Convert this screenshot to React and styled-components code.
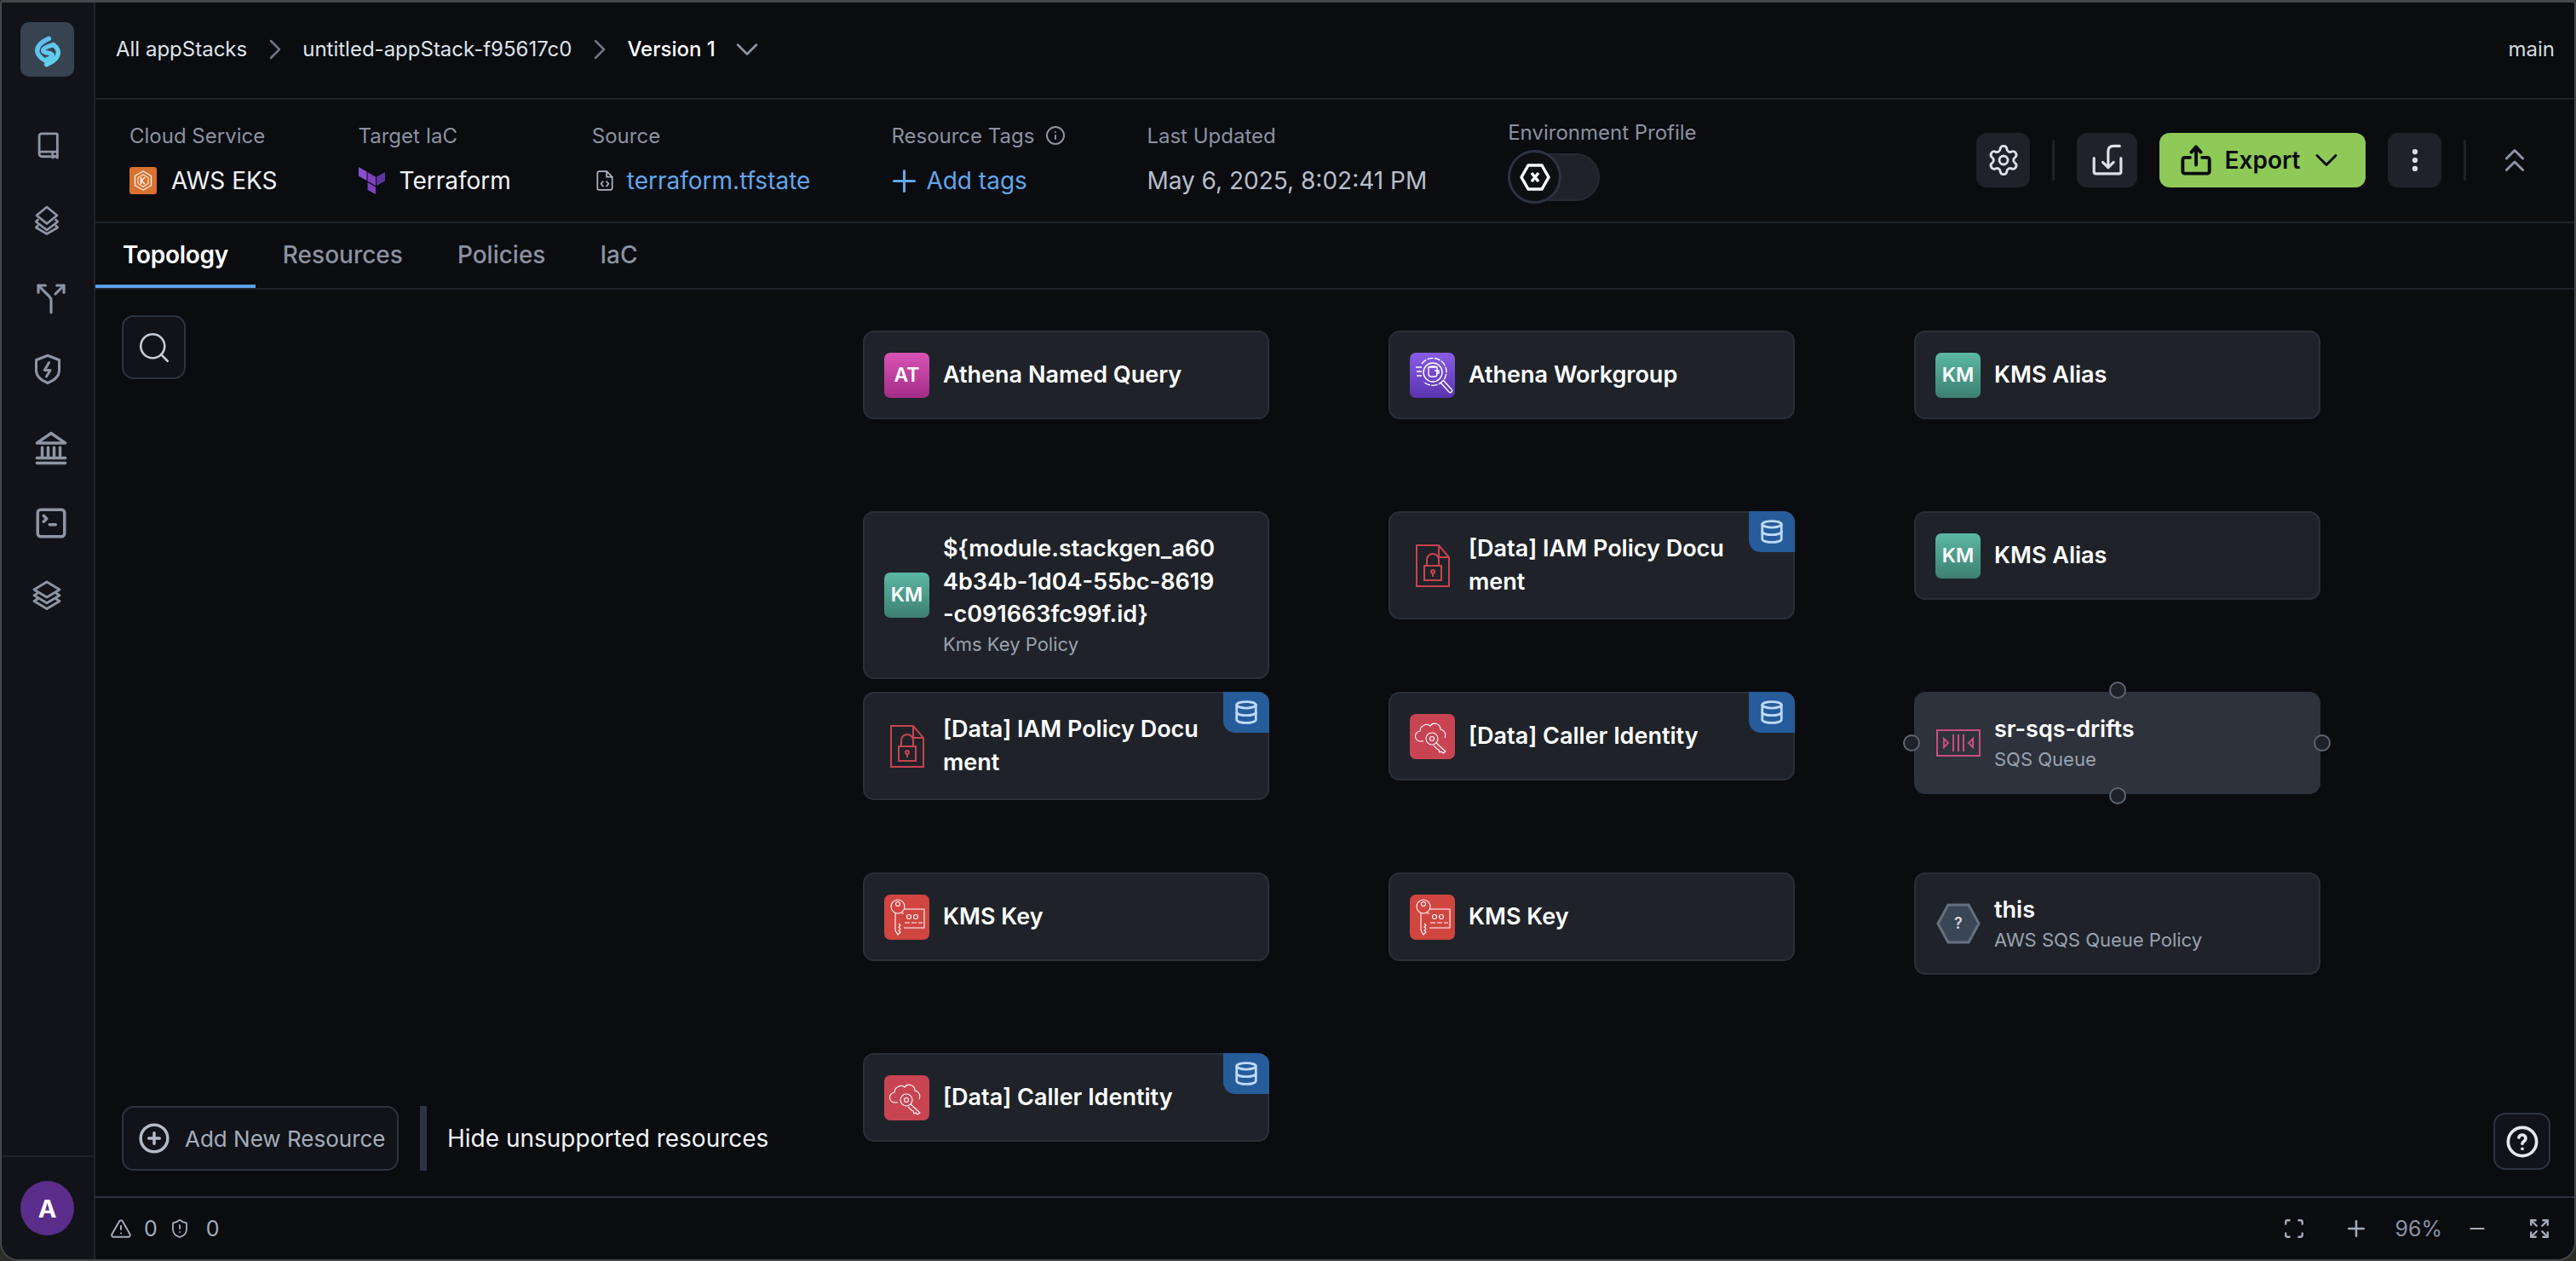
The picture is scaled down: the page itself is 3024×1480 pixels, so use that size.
import React from "react";
import styled, { createGlobalStyle } from "styled-components";
import {
  Settings, EllipsisVertical, ChevronsUp, ChevronDown, ChevronRight, Search, Plus, Info,
  Database, CirclePlus, TriangleAlert, ShieldAlert, Minus, Scan, Expand, SquareTerminal, Split,
} from "lucide-react";

const Global = createGlobalStyle`
  html, body { margin: 0; padding: 0; background: #2b2d26; }
  body { font-family: Inter, "Noto Sans", sans-serif; -webkit-font-smoothing: antialiased; }
  * { box-sizing: border-box; }
`;

const Frame = styled.div`
  width: 3024px; height: 1480px; display: flex; background: #0a0c10; color: #fff;
  border: 2px solid #45474b; border-top-width: 3px; border-radius: 4px 4px 22px 22px; overflow: hidden;
`;
const Sidebar = styled.aside`
  width: 110px; flex: none; display: flex; flex-direction: column; background: #111318;
  border-right: 2px solid #1f2329; padding-left: 22px;
`;
const LogoBox = styled.div`
  width: 63px; height: 64px; margin-top: 23px; border-radius: 10px; background: #384351;
  display: flex; align-items: center; justify-content: center;
`;
const NavList = styled.nav`display: flex; flex-direction: column; margin-top: 63px;`;
const NavItem = styled.div`
  width: 63px; height: 36px; margin-top: ${p => p.$gap}px; display: flex; align-items: center; justify-content: center;
  color: #8e96a4; transform: translateX(${p => p.$dx}px);
`;
const SideFoot = styled.div`
  margin-top: auto; margin-left: -22px; border-top: 2px solid #1f2329; padding: 28px 0 28px 22px;
`;
const Avatar = styled.div`
  width: 63px; height: 64px; border-radius: 50%; background: #5b2d8a; display: flex; align-items: center; justify-content: center;
  font-weight: 700; font-size: 29px; color: #fff;
`;
const Main = styled.main`flex: 1; min-width: 0; display: flex; flex-direction: column;`;
const Header = styled.header`
  height: 114px; flex: none; display: flex; align-items: center; padding: 0 23px 3px 24px; border-bottom: 2px solid #1f2329; font-size: 24px; color: #dfe3e9;
`;
const Crumb = styled.span`font-weight: ${p => (p.$strong ? 500 : 400)}; color: ${p => (p.$strong ? "#fff" : "#dfe3e9")};`;
const Sep = styled.span`display: flex; color: #6f7683; margin: 0 12px 0 13px;`;
const Caret = styled.span`display: flex; color: #8e96a4; margin-left: 15px;`;
const Branch = styled.span`margin-left: auto; color: #d5d9df;`;
const InfoBar = styled.section`
  height: 145px; flex: none; display: flex; gap: 95px; padding: 25px 47px 0 40px; border-bottom: 2px solid #1f2329;
`;
const Col = styled.div`display: flex; flex-direction: column; margin-top: ${p => p.$top || 0}px;`;
const Label = styled.div`display: flex; align-items: center; gap: 13px; height: 34px; font-size: 24px; color: #8b92a0;`;
const Value = styled.div`
  display: flex; align-items: center; gap: ${p => p.$gap || 17}px; height: 40px; margin-top: 16px; font-size: 28px; color: ${p => p.$color || "#f2f4f7"};
`;
const FileGlyph = styled.span`display: flex; color: #aeb5c1; margin-left: 2px;`;
const PlusGlyph = styled.span`display: flex; margin-left: -5px;`;
const Toggle = styled.div`position: relative; width: 108px; height: 63px; margin-top: 4px; display: flex; align-items: center;`;
const Track = styled.div`position: absolute; right: 0; top: 4px; width: 90px; height: 56px; border-radius: 28px; background: #1f2329; border: 2px solid #252a32;`;
const Knob = styled.div`
  position: relative; width: 63px; height: 63px; border-radius: 50%; background: #0d0f13; border: 3px solid #2d3340; display: flex; align-items: center; justify-content: center;
`;
const Actions = styled.div`margin-left: auto; margin-top: 14px; height: 64px; display: flex; align-items: center; gap: 26px;`;
const IconBtn = styled.button`
  width: ${p => p.$w || 63}px; height: 64px; padding: 0; border: 0; border-radius: 12px; background: #1f2329; color: #dde1e7; display: flex; align-items: center; justify-content: center;
`;
const ExportBtn = styled.button`
  width: 242px; height: 64px; padding: 0; border: 0; border-radius: 12px; background: #8fc957; color: #0a0c10; display: flex; align-items: center; justify-content: center; gap: 15px;
  font: 600 28px Inter, sans-serif;
`;
const ExportCaret = styled.span`display: flex; margin-left: -6px;`;
const VDiv = styled.span`width: 3px; height: 48px; background: #1f2329; border-radius: 2px;`;
const Collapse = styled.span`display: flex; color: #8e96a4; margin-left: 8px;`;
const Tabs = styled.div`height: 78px; flex: none; display: flex; border-bottom: 2px solid #1f2329;`;
const Tab = styled.div`
  height: 76px; padding: 2px 32px 0; display: flex; align-items: center; font-size: 28px;
  font-weight: ${p => (p.$active ? 600 : 500)}; color: ${p => (p.$active ? "#fff" : "#8b92a0")};
  letter-spacing: ${p => (p.$active ? "-0.3px" : "0")};
  border-bottom: 4px solid ${p => (p.$active ? "#5a9fe6" : "transparent")};
`;
const Canvas = styled.div`flex: 1; position: relative; min-height: 0;`;
const FloatBtn = styled.button`
  position: absolute; width: ${p => p.$size}px; height: ${p => p.$size}px; padding: 0; border-radius: 14px; border: 2px solid #2d3340; background: #111318;
  display: flex; align-items: center; justify-content: center; color: ${p => p.$color};
  ${p => p.$top !== undefined && `top: ${p.$top}px; left: ${p.$left}px;`}
  ${p => p.$bottom !== undefined && `bottom: ${p.$bottom}px; right: ${p.$right}px;`}
`;
const AddBar = styled.div`position: absolute; left: 31px; bottom: 30px; height: 76px; display: flex; align-items: center;`;
const AddBtn = styled.button`
  width: 325px; height: 76px; padding: 0 0 0 17px; border: 2px solid #2d3340; border-radius: 14px; background: #111318; color: #a5adba;
  display: flex; align-items: center; gap: 17px; font: 400 26px Inter, sans-serif;
`;
const Bar = styled.span`width: 8px; height: 76px; background: #2d3340; margin: 0 24px 0 25px;`;
const HideText = styled.span`font-size: 28px; color: #f2f4f7;`;
const Node = styled.div`
  position: absolute; left: ${p => p.$x}px; top: ${p => p.$y}px; width: 477px; min-height: 104px;
  display: flex; align-items: center; gap: 16px; padding: 23px 23px;
  border-radius: 13px; background: ${p => (p.$selected ? "#2d323c" : "#1f2329")}; border: 2px solid ${p => (p.$selected ? "#2d323c" : "#2a2f38")};
`;
const Tile = styled.div`
  width: 53px; height: 53px; flex: none; border-radius: 7px; display: flex; align-items: center; justify-content: center;
  background: ${p => p.$bg}; font-weight: 600; font-size: 23px; color: #fff;
`;
const NodeText = styled.div`min-width: 0; width: 322px;`;
const NodeTitle = styled.div`font-size: 27px; line-height: 38.6px; font-weight: 600; color: #fff; word-break: break-all;`;
const NodeSub = styled.div`font-size: 22px; line-height: 31px; color: #9aa2af;`;
const Badge = styled.div`
  position: absolute; right: -2px; top: -2px; width: 54px; height: 48px; display: flex; align-items: center; justify-content: center;
  background: #265c9a; color: #bfdbfe; border-radius: 0 13px 0 14px;
`;
const Handle = styled.span`
  position: absolute; width: 20px; height: 20px; border-radius: 50%; border: 2px solid #5d6572; background: #1f2329;
  ${p => p.$side === "top" && "top: -14px; left: 50%; margin-left: -10px;"}
  ${p => p.$side === "bottom" && "bottom: -14px; left: 50%; margin-left: -10px;"}
  ${p => p.$side === "left" && "left: -15px; top: 50%; margin-top: -10px;"}
  ${p => p.$side === "right" && "right: -14px; top: 50%; margin-top: -10px;"}
`;
const StatusBar = styled.footer`
  height: 74px; flex: none; border-top: 2px solid #2d3340; display: flex; align-items: center; padding: 0 28px 0 17px; font-size: 25px; color: #a5adba;
`;
const StatusItem = styled.span`display: flex; align-items: center; margin-left: ${p => p.$ml || 0}px; color: ${p => p.$color || "#a5adba"};`;
const Spacer = styled.span`flex: 1;`;

/* drawings */
const Logo = () => (
  <svg width="63" height="64" viewBox="0 0 64 64" fill="none" stroke="url(#lg)" strokeWidth="5.500" strokeLinecap="round" strokeLinejoin="round">
    <defs>
      <linearGradient id="lg" gradientUnits="userSpaceOnUse" x1="18" y1="18" x2="46" y2="52">
        <stop offset="0" stopColor="#62b8f2" /><stop offset="1" stopColor="#5fd8e8" />
      </linearGradient>
    </defs>
    <path d="M34 19C27 22 20 27 20 33.500c0 4 3 7 6 9.500" />
    <path d="M31 50c7-3 14-8 14-14.500 0-4-3-7-6-9" />
    <path d="M39 26.500C33 28 27 30 27 33.500c0 3.500 11 2 11 5.500 0 3-5 4-9 6" />
  </svg>
);
const S = ({ w, h, vb = "0 0 24 24", sw = 2, children }) => (
  <svg width={w} height={h || w} viewBox={vb} fill="none" stroke="currentColor" strokeWidth={sw} strokeLinecap="round" strokeLinejoin="round">{children}</svg>
);
const BookIcon = () => (
  <S w={34} h={38} sw={2}><path d="M5 18V4a2 2 0 0 1 2-2h12a1 1 0 0 1 1 1v16M5 18a2.500 2.500 0 0 0 0 .5C5 20 6 21 7 21h7M5 18c0-.8 1-1 2-1h13M16 17v5l2-1.500 2 1.500v-5" /></S>
);
const StackIcon = () => (
  <S w={38} h={36} vb="0 0 24 24" sw={1.800}><path d="M12 2 20 8.500 12 15 4 8.500Z" /><path d="M5 12l-1.500 1.500L12 20l8.500-6.500L19 12" /><path d="M5 16.500 3.500 18 12 23l8.500-5L19 16.500" /></S>
);
const ShieldBolt = () => (
  <S w={36} h={38} sw={2}><path d="M12 1.500 21 5v8c0 5-4 8-9 10-5-2-9-5-9-10V5Z" /><path d="M13 7l-3.500 6H14l-3 5" /></S>
);
const BankIcon = () => (
  <S w={42} h={42} sw={2}><path d="M2.500 8.500 12 2l9.500 6.500Z" /><path d="M6 11.500V17M10 11.500V17M14 11.500V17M18 11.500V17M2.500 18.500h19M2.500 22h19" /></S>
);
const StackThin = () => (
  <S w={38} h={36} sw={1.900}><path d="M12 2 22 8 12 14 2 8Z" /><path d="M4.500 11 2 12.500l10 6 10-6L19.500 11" /><path d="M4.500 15.500 2 17l10 6 10-6-2.500-1.500" /></S>
);
const AwsEks = () => (
  <svg width="32" height="32" viewBox="0 0 32 32" fill="none">
    <rect width="32" height="32" rx="3" fill="#d9712f" />
    <path d="M16 5l9.500 5.500v11L16 27l-9.500-5.500v-11Z" stroke="#fff" strokeWidth="1.400" opacity=".85" />
    <path d="M16 9l6 3.500v7L16 23l-6-3.500v-7Z" stroke="#fff" strokeWidth="1.200" opacity=".85" />
    <path d="M13.500 12v8M18 12l-4 4 4 4" stroke="#fff" strokeWidth="1.400" />
  </svg>
);
const TerraformLogo = () => (
  <svg width="31" height="32" viewBox="0 0 31 32" fill="#7b42bc">
    <path d="M0 0l9.500 5.500v10.500L0 10.500Z" fill="#8a4fd0" />
    <path d="M10.500 6 20 11.500V22L10.500 16.500Z" />
    <path d="M10.500 18 20 23.500V32L10.500 27Z" />
    <path d="M21 11.500 31 6v10.500L21 22Z" fill="#5c33a0" />
  </svg>
);
const FileCodeIcon = () => (
  <S w={26} h={30} sw={1.600}><path d="M14 2H6a2 2 0 0 0-2 2v16a2 2 0 0 0 2 2h12a2 2 0 0 0 2-2V8Z" /><path d="M14 2v6h6M10 13l-2 2.500 2 2.500M14 13l2 2.500-2 2.500" /></S>
);
const HexX = () => (
  <svg width="36" height="32" viewBox="0 0 36 32" fill="none">
    <path d="M10 2h16l8 14-8 14H10L2 16Z" stroke="#fff" strokeWidth="3.500" strokeLinejoin="round" />
    <path d="M14 11l8 10M22 11l-8 10" stroke="#fff" strokeWidth="3.500" />
  </svg>
);
const ImportIcon = () => (
  <S w={38} h={38} sw={2}>
    <path d="M2 10.500V20.500A1.500 1.500 0 0 0 3.500 22h17a1.500 1.500 0 0 0 1.500-1.500V10.500" />
    <path d="M21 1.500h-4.500c-2.500 0-4 1.500-4 4V17.500M8.500 13.500l4 4 4-4" />
  </S>
);
const ExportIcon = () => (
  <svg width="38" height="36" viewBox="0 0 24 23" fill="none" stroke="#0a0c10" strokeWidth="2.500" strokeLinecap="round" strokeLinejoin="round">
    <path d="M7.500 9.500H3.500A1.500 1.500 0 0 0 2 11v9a1.500 1.500 0 0 0 1.500 1.500h17A1.500 1.500 0 0 0 22 20v-9a1.500 1.500 0 0 0-1.500-1.500h-4" /><path d="M12 15V2M8.500 5.500 12 1.500l3.500 4" />
  </svg>
);
const DocLock = () => (
  <svg width="42" height="50" viewBox="0 0 42 50" fill="none" stroke="#c8434f" strokeWidth="2">
    <path d="M2 1h26l12 14v34H2Z" /><path d="M28 1v14h12" /><rect x="11" y="25" width="20" height="17" />
    <path d="M14 25v-7a7 7 0 0 1 14 0v7" /><circle cx="21" cy="32" r="2" /><path d="M21 34v4" />
  </svg>
);
const CloudKey = () => (
  <svg width="42" height="42" viewBox="0 0 42 42" fill="none" stroke="#fff" strokeWidth="1.100">
    <path d="M10 27H7a6 6 0 0 1-1-12c0-6 8-10 12-6 3-5 12-3 12 4 5 1 7 6 5 10" />
    <circle cx="20" cy="24" r="7" /><circle cx="20" cy="24" r="2.500" /><path d="M25 29l11 10-3 2-2-2-2 1-1-3-2-1-4-4" />
  </svg>
);
const KeyCard = () => (
  <svg width="44" height="46" viewBox="0 0 44 46" fill="none" stroke="#fff" strokeWidth="1.100">
    <circle cx="11" cy="11" r="8" /><circle cx="11" cy="8" r="2.500" />
    <path d="M8 19v20l3 5 3-3-2-2 2-2-2-2 2-2-2-2" /><path d="M15 19h3M18 14h24v22H18" />
    <circle cx="24" cy="23" r="2.500" /><circle cx="32" cy="23" r="2.500" /><path d="M19 30h6M27 30h6M35 30h5" />
  </svg>
);
const AthenaGlass = () => (
  <svg width="53" height="53" viewBox="0 0 53 53" fill="none" stroke="#fff" strokeWidth="1.400">
    <path d="M14 13a16 16 0 1 1 2 21" strokeDasharray="7 1.500" />
    <circle cx="27" cy="23" r="11" />
    <path d="M22 17h10v8a3 3 0 0 1-3 3h-4a3 3 0 0 1-3-3ZM22 17c2-1.500 8-1.500 10 0M29 21h5v3h-3" />
    <path d="M7 17h7M8 22h6M8 27h6" />
    <path d="M36 35l10 11a2 2 0 0 0 3-3L39 32" />
  </svg>
);
const SqsIcon = () => (
  <svg width="52" height="32" viewBox="0 0 52 32" fill="none" stroke="#c74f80" strokeWidth="2">
    <rect x="1" y="1" width="50" height="30" /><path d="M20 6v20M26 6v20M32 6v20" />
    <path d="M9 11l5 5-5 5ZM43 11l-5 5 5 5Z" />
  </svg>
);
const UnknownHex = () => (
  <svg width="52" height="48" viewBox="0 0 52 48" fill="#3a4556" stroke="#667080" strokeWidth="3">
    <path d="M14 2h24l12 22-12 22H14L2 24Z" />
    <text x="26" y="30" textAnchor="middle" fontSize="18" fontWeight="600" fill="#d5d9df" stroke="none" fontFamily="Inter, sans-serif">?</text>
  </svg>
);
const HelpIcon = () => (
  <S w={40} h={40} sw={2.200}><circle cx="12" cy="12" r="10" /><path d="M9.500 9a2.500 2.500 0 0 1 4.900.8c0 1.700-2.400 2-2.400 3.500" /><path d="M12 17h.01" /></S>
);

const teal = "linear-gradient(#5bb8a4,#3d7f70)";
const nodes = [
  { x: 901, y: 48, tile: "AT", bg: "linear-gradient(#d953b5,#a42c88)", title: "Athena Named Query" },
  { x: 1518, y: 48, icon: <AthenaGlass />, bg: "linear-gradient(#8a5ce6,#5a34b0)", title: "Athena Workgroup" },
  { x: 2135, y: 48, tile: "KM", bg: teal, title: "KMS Alias" },
  { x: 901, y: 260, tile: "KM", bg: teal, title: "${module.stackgen_a604b34b-1d04-55bc-8619-c091663fc99f.id}", sub: "Kms Key Policy" },
  { x: 1518, y: 260, raw: <DocLock />, title: "[Data] IAM Policy Document", badge: true },
  { x: 2135, y: 260, tile: "KM", bg: teal, title: "KMS Alias" },
  { x: 901, y: 472, raw: <DocLock />, title: "[Data] IAM Policy Document", badge: true },
  { x: 1518, y: 472, icon: <CloudKey />, bg: "#c94453", title: "[Data] Caller Identity", badge: true },
  { x: 2135, y: 472, raw: <SqsIcon />, title: "sr-sqs-drifts", sub: "SQS Queue", selected: true },
  { x: 901, y: 684, icon: <KeyCard />, bg: "#d04540", title: "KMS Key" },
  { x: 1518, y: 684, icon: <KeyCard />, bg: "#d04540", title: "KMS Key" },
  { x: 2135, y: 684, raw: <UnknownHex />, title: "this", sub: "AWS SQS Queue Policy" },
  { x: 901, y: 896, icon: <CloudKey />, bg: "#c94453", title: "[Data] Caller Identity", badge: true },
];

const nav = [
  { icon: <BookIcon />, gap: 0, dx: 0 },
  { icon: <StackIcon />, gap: 51, dx: -1 },
  { icon: <Split size={40} strokeWidth={1.900} />, gap: 56, dx: 4 },
  { icon: <ShieldBolt />, gap: 47, dx: 0 },
  { icon: <BankIcon />, gap: 57, dx: 4 },
  { icon: <SquareTerminal size={42} strokeWidth={2} />, gap: 52, dx: 4 },
  { icon: <StackThin />, gap: 48, dx: -1 },
];

export default function App() {
  return (
    <>
      <Global />
      <Frame>
        <Sidebar>
          <LogoBox><Logo /></LogoBox>
          <NavList>
            {nav.map((n, i) => <NavItem key={i} $gap={n.gap} $dx={n.dx}>{n.icon}</NavItem>)}
          </NavList>
          <SideFoot><Avatar>A</Avatar></SideFoot>
        </Sidebar>
        <Main>
          <Header>
            <Crumb>All appStacks</Crumb>
            <Sep><ChevronRight size={40} strokeWidth={1.500} /></Sep>
            <Crumb>untitled-appStack-f95617c0</Crumb>
            <Sep><ChevronRight size={40} strokeWidth={1.500} /></Sep>
            <Crumb $strong>Version 1</Crumb>
            <Caret><ChevronDown size={44} strokeWidth={1.400} /></Caret>
            <Branch>main</Branch>
          </Header>
          <InfoBar>
            <Col><Label>Cloud Service</Label><Value><AwsEks />AWS EKS</Value></Col>
            <Col><Label>Target IaC</Label><Value><TerraformLogo />Terraform</Value></Col>
            <Col><Label>Source</Label><Value $gap={13} $color="#62a6ea"><FileGlyph><FileCodeIcon /></FileGlyph>terraform.tfstate</Value></Col>
            <Col><Label>Resource Tags<Info size={24} strokeWidth={2} /></Label><Value $gap={5} $color="#62a6ea"><PlusGlyph><Plus size={41} strokeWidth={1.800} /></PlusGlyph>Add tags</Value></Col>
            <Col><Label>Last Updated</Label><Value $color="#b8bfca">May 6, 2025, 8:02:41 PM</Value></Col>
            <Col $top={-4}><Label>Environment Profile</Label><Toggle><Track /><Knob><HexX /></Knob></Toggle></Col>
            <Actions>
              <IconBtn><Settings size={40} strokeWidth={1.700} /></IconBtn>
              <VDiv />
              <IconBtn $w={71}><ImportIcon /></IconBtn>
              <ExportBtn><ExportIcon />Export<ExportCaret><ChevronDown size={44} strokeWidth={1.600} /></ExportCaret></ExportBtn>
              <IconBtn><EllipsisVertical size={34} strokeWidth={2.400} /></IconBtn>
              <VDiv />
              <Collapse><ChevronsUp size={46} strokeWidth={1.500} /></Collapse>
            </Actions>
          </InfoBar>
          <Tabs>
            <Tab $active>Topology</Tab>
            <Tab>Resources</Tab>
            <Tab>Policies</Tab>
            <Tab>IaC</Tab>
          </Tabs>
          <Canvas>
            <FloatBtn $size={75} $top={30} $left={31} $color="#c7ccd5"><Search size={42} strokeWidth={1.500} /></FloatBtn>
            {nodes.map((n, i) => (
              <Node key={i} $x={n.x} $y={n.y} $selected={n.selected}>
                {n.raw ? <Tile $bg="transparent">{n.raw}</Tile> : <Tile $bg={n.bg}>{n.tile || n.icon}</Tile>}
                <NodeText>
                  <NodeTitle>{n.title}</NodeTitle>
                  {n.sub && <NodeSub>{n.sub}</NodeSub>}
                </NodeText>
                {n.badge && <Badge><Database size={30} strokeWidth={2.200} /></Badge>}
                {n.selected && ["top", "bottom", "left", "right"].map(s => <Handle key={s} $side={s} />)}
              </Node>
            ))}
            <AddBar>
              <AddBtn><CirclePlus size={38} strokeWidth={2.200} color="#b4bcc9" />Add New Resource</AddBtn>
              <Bar />
              <HideText>Hide unsupported resources</HideText>
            </AddBar>
            <FloatBtn $size={67} $bottom={31} $right={28} $color="#e5e8ed"><HelpIcon /></FloatBtn>
          </Canvas>
          <StatusBar>
            <StatusItem><TriangleAlert size={26} strokeWidth={1.800} /></StatusItem>
            <StatusItem $ml={14}>0</StatusItem>
            <StatusItem $ml={14}><ShieldAlert size={24} strokeWidth={1.800} /></StatusItem>
            <StatusItem $ml={19}>0</StatusItem>
            <Spacer />
            <StatusItem><Scan size={26} strokeWidth={2.200} /></StatusItem>
            <StatusItem $ml={45}><Plus size={30} strokeWidth={2} /></StatusItem>
            <StatusItem $ml={30} $color="#8b92a0">96%</StatusItem>
            <StatusItem $ml={28}><Minus size={26} strokeWidth={2} /></StatusItem>
            <StatusItem $ml={47}><Expand size={26} strokeWidth={2.200} /></StatusItem>
          </StatusBar>
        </Main>
      </Frame>
    </>
  );
}
